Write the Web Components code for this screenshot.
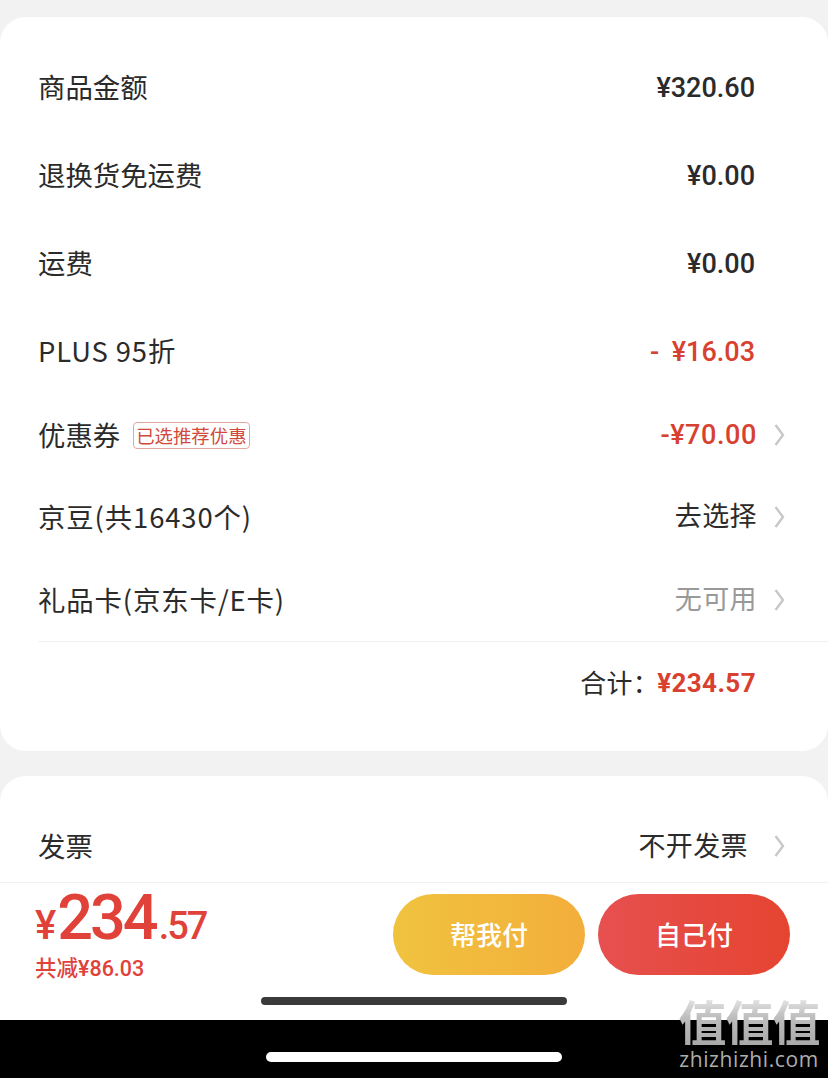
<!DOCTYPE html>
<html lang="zh">
<head>
<meta charset="utf-8">
<style>
  html, body { margin: 0; height: 100%; }
  body {
    width: 828px;
    height: 1078px;
    overflow: hidden;
    position: relative;
    background: #f2f2f2;
    font-family: "Noto Sans CJK SC", "Noto Sans", sans-serif;
    color: #2b2b2b;
  }
  #cards { display: flex; flex-direction: column; gap: 25px; padding-top: 17px; height: 882px; box-sizing: border-box; overflow: hidden; }
</style>
</head>
<body>
<div id="cards">
  <order-card style="height:734px">
    <price-row height="88" label="商品金额" drop="2"><span slot="value">¥320.60</span></price-row>
    <price-row height="88" label="退换货免运费" drop="2"><span slot="value">¥0.00</span></price-row>
    <price-row height="88" label="运费" drop="2"><span slot="value">¥0.00</span></price-row>
    <price-row height="88" label="PLUS 95折" tone="red" spaced drop="2"><span slot="value" style="word-spacing:6px">-&nbsp;¥16.03</span></price-row>
    <price-row height="80" label="优惠券" tag="已选推荐优惠" tone="red" arrow><span slot="value" style="letter-spacing:.6px">-¥70.00</span></price-row>
    <price-row height="84" label="京豆(共16430个)" arrow plain spaced lift="4"><span slot="value">去选择</span></price-row>
    <price-row height="81" label="礼品卡(京东卡/E卡)" arrow tone="grey" plain spaced lift="4"><span slot="value">无可用</span></price-row>
    <total-row amount="¥234.57"></total-row>
  </order-card>
  <order-card style="height:200px">
    <price-row height="88" label="发票" arrow plain wide lift="2"><span slot="value">不开发票</span></price-row>
  </order-card>
</div>
<pay-bar></pay-bar>
<home-strip></home-strip>
<site-mark></site-mark>

<script>
const NUM = '"Roboto", "Noto Sans CJK SC", sans-serif';

class OrderCard extends HTMLElement {
  constructor() {
    super();
    this.attachShadow({ mode: "open" });
    this.shadowRoot.innerHTML = `
      <style>
        :host { display: block; background: #fff; border-radius: 26px; padding-top: 26px; box-sizing: border-box; flex-shrink: 0; }
      </style>
      <slot></slot>
    `;
  }
}

class PriceRow extends HTMLElement {
  constructor() {
    super();
    this.attachShadow({ mode: "open" });
  }

  connectedCallback() {
    const h = this.getAttribute("height") || 88;
    const tag = this.getAttribute("tag");
    const arrow = this.hasAttribute("arrow");
    const tone = this.getAttribute("tone");
    const plain = this.hasAttribute("plain");
    const wide = this.hasAttribute("wide");
    const lift = this.getAttribute("lift") || 0;
    const drop = this.getAttribute("drop") || 0;
    const colors = { red: "#d8412f", grey: "#999" };
    this.shadowRoot.innerHTML = `
      <style>
        :host { display: flex; align-items: center; height: ${h}px; padding: 0 43px 0 38px; box-sizing: border-box; font-size: 27.4px; line-height: 36px; }
        .label { display: flex; align-items: center; gap: 13px; flex: 1; color: #2b2b2b; margin-bottom: 2px; letter-spacing: ${this.hasAttribute("spaced") ? "0.9px" : "0"}; }
        .tag { font-size: 18.4px; line-height: 25px; height: 27px; padding: 0 2px 0 2px; margin-bottom: -2px; border: 1px solid #e2a89f; border-radius: 4px; color: #cf4a3c; letter-spacing: 0; box-sizing: border-box; white-space: nowrap; }
        .value { font-family: ${NUM}; font-weight: 500; font-size: 27px; color: ${colors[tone] || "#2b2b2b"}; margin-right: ${arrow ? (wide ? 26 : 17) : 30}px; margin-top: ${drop}px; margin-bottom: ${lift}px; white-space: nowrap; }
        .value.cjk { font-family: "Noto Sans CJK SC", sans-serif; font-weight: 400; letter-spacing: .4px; }
        svg { width: 11px; height: 24px; display: ${arrow ? "block" : "none"}; flex-shrink: 0; }
      </style>
      <div class="label"><span>${this.getAttribute("label")}</span>${tag ? `<span class="tag">${tag}</span>` : ""}</div>
      <div class="value ${plain ? "cjk" : ""}"><slot name="value"></slot></div>
      <svg viewBox="0 0 11 24" fill="none" stroke="#c8c8c8" stroke-width="2.4"><path d="M1.5 2 L9 12 L1.5 22"/></svg>
    `;
  }
}

class TotalRow extends HTMLElement {
  constructor() {
    super();
    this.attachShadow({ mode: "open" });
  }

  connectedCallback() {
    this.shadowRoot.innerHTML = `
      <style>
        :host { display: flex; justify-content: flex-end; align-items: center; gap: 0; margin: 1px 0 0 38px; border-top: 1px solid #f1f1f1; height: 82px; padding-right: 72px; box-sizing: border-box; font-size: 26px; }
        .lbl { width: 77px; white-space: nowrap; margin-bottom: 2px; letter-spacing: .3px; }
        .amt { font-family: ${NUM}; font-weight: 700; color: #d8412f; font-size: 26px; letter-spacing: .4px; }
      </style>
      <span class="lbl">合计：</span><span class="amt">${this.getAttribute("amount")}</span>
    `;
  }
}

class PayBar extends HTMLElement {
  constructor() {
    super();
    this.attachShadow({ mode: "open" });
    this.shadowRoot.innerHTML = `
      <style>
        :host { display: block; position: absolute; left: 0; top: 882px; width: 828px; height: 138px; background: #fff; border-top: 1px solid #f2f2f2; box-sizing: border-box; padding: 11px 38px 0 35px; }
        .top { display: flex; justify-content: space-between; }
        .price { color: #e0423a; font-family: ${NUM}; margin-top: -4px; }
        .big { display: flex; align-items: baseline; font-weight: 500; height: 56px; line-height: 56px; }
        .y { font-size: 40px; margin-right: 1px; }
        .i { font-size: 63px; letter-spacing: -3px; }
        .d { font-size: 38px; letter-spacing: -2px; margin-left: 3px; }
        .save { font-size: 21.5px; line-height: 26px; margin-top: 10px; font-weight: 500; white-space: nowrap; }
        .btns { display: flex; gap: 13px; }
        .btn { width: 192px; height: 81px; border-radius: 41px; color: #fff; font-size: 26px; font-weight: 500; display: flex; align-items: center; justify-content: center; padding-bottom: 2px; box-sizing: border-box; }
        .a { background: linear-gradient(90deg, #f0c33f, #f3ae3b); }
        .b { background: linear-gradient(90deg, #e6504f, #e54430); }
        .home { width: 306px; height: 8px; background: #3a3a3a; border-radius: 4px; position: absolute; left: 261px; top: 114px; }
      </style>
      <div class="top">
        <div class="price">
          <div class="big"><span class="y">¥</span><span class="i">234</span><span class="d">.57</span></div>
          <div class="save">共减¥86.03</div>
        </div>
        <div class="btns">
          <div class="btn a">帮我付</div>
          <div class="btn b">自己付</div>
        </div>
      </div>
      <div class="home"></div>
    `;
  }
}

class HomeStrip extends HTMLElement {
  constructor() {
    super();
    this.attachShadow({ mode: "open" });
    this.shadowRoot.innerHTML = `
      <style>
        :host { display: flex; justify-content: center; position: absolute; left: 0; top: 1020px; width: 828px; height: 58px; background: #000; padding-top: 32px; box-sizing: border-box; }
        div { width: 296px; height: 10px; border-radius: 5px; background: #fff; }
      </style>
      <div></div>
    `;
  }
}

class SiteMark extends HTMLElement {
  constructor() {
    super();
    this.attachShadow({ mode: "open" });
    this.shadowRoot.innerHTML = `
      <style>
        :host { display: block; position: absolute; left: 676px; top: 995px; width: 146px; text-align: center; }
        .g { font-size: 48px; line-height: 50px; height: 50px; font-weight: 700; letter-spacing: -1px; white-space: nowrap; color: transparent; background: linear-gradient(180deg, #ececec, #bdbdbd 45%, #a9a9a9); -webkit-background-clip: text; background-clip: text; }
        .u { font-family: "Open Sans", sans-serif; font-size: 21px; line-height: 24px; letter-spacing: .6px; margin-top: 2px; white-space: nowrap; color: #adadad; }
      </style>
      <div class="g">值值值</div>
      <div class="u">zhizhizhi.com</div>
    `;
  }
}

customElements.define("order-card", OrderCard);
customElements.define("price-row", PriceRow);
customElements.define("total-row", TotalRow);
customElements.define("pay-bar", PayBar);
customElements.define("home-strip", HomeStrip);
customElements.define("site-mark", SiteMark);
</script>
</body>
</html>
